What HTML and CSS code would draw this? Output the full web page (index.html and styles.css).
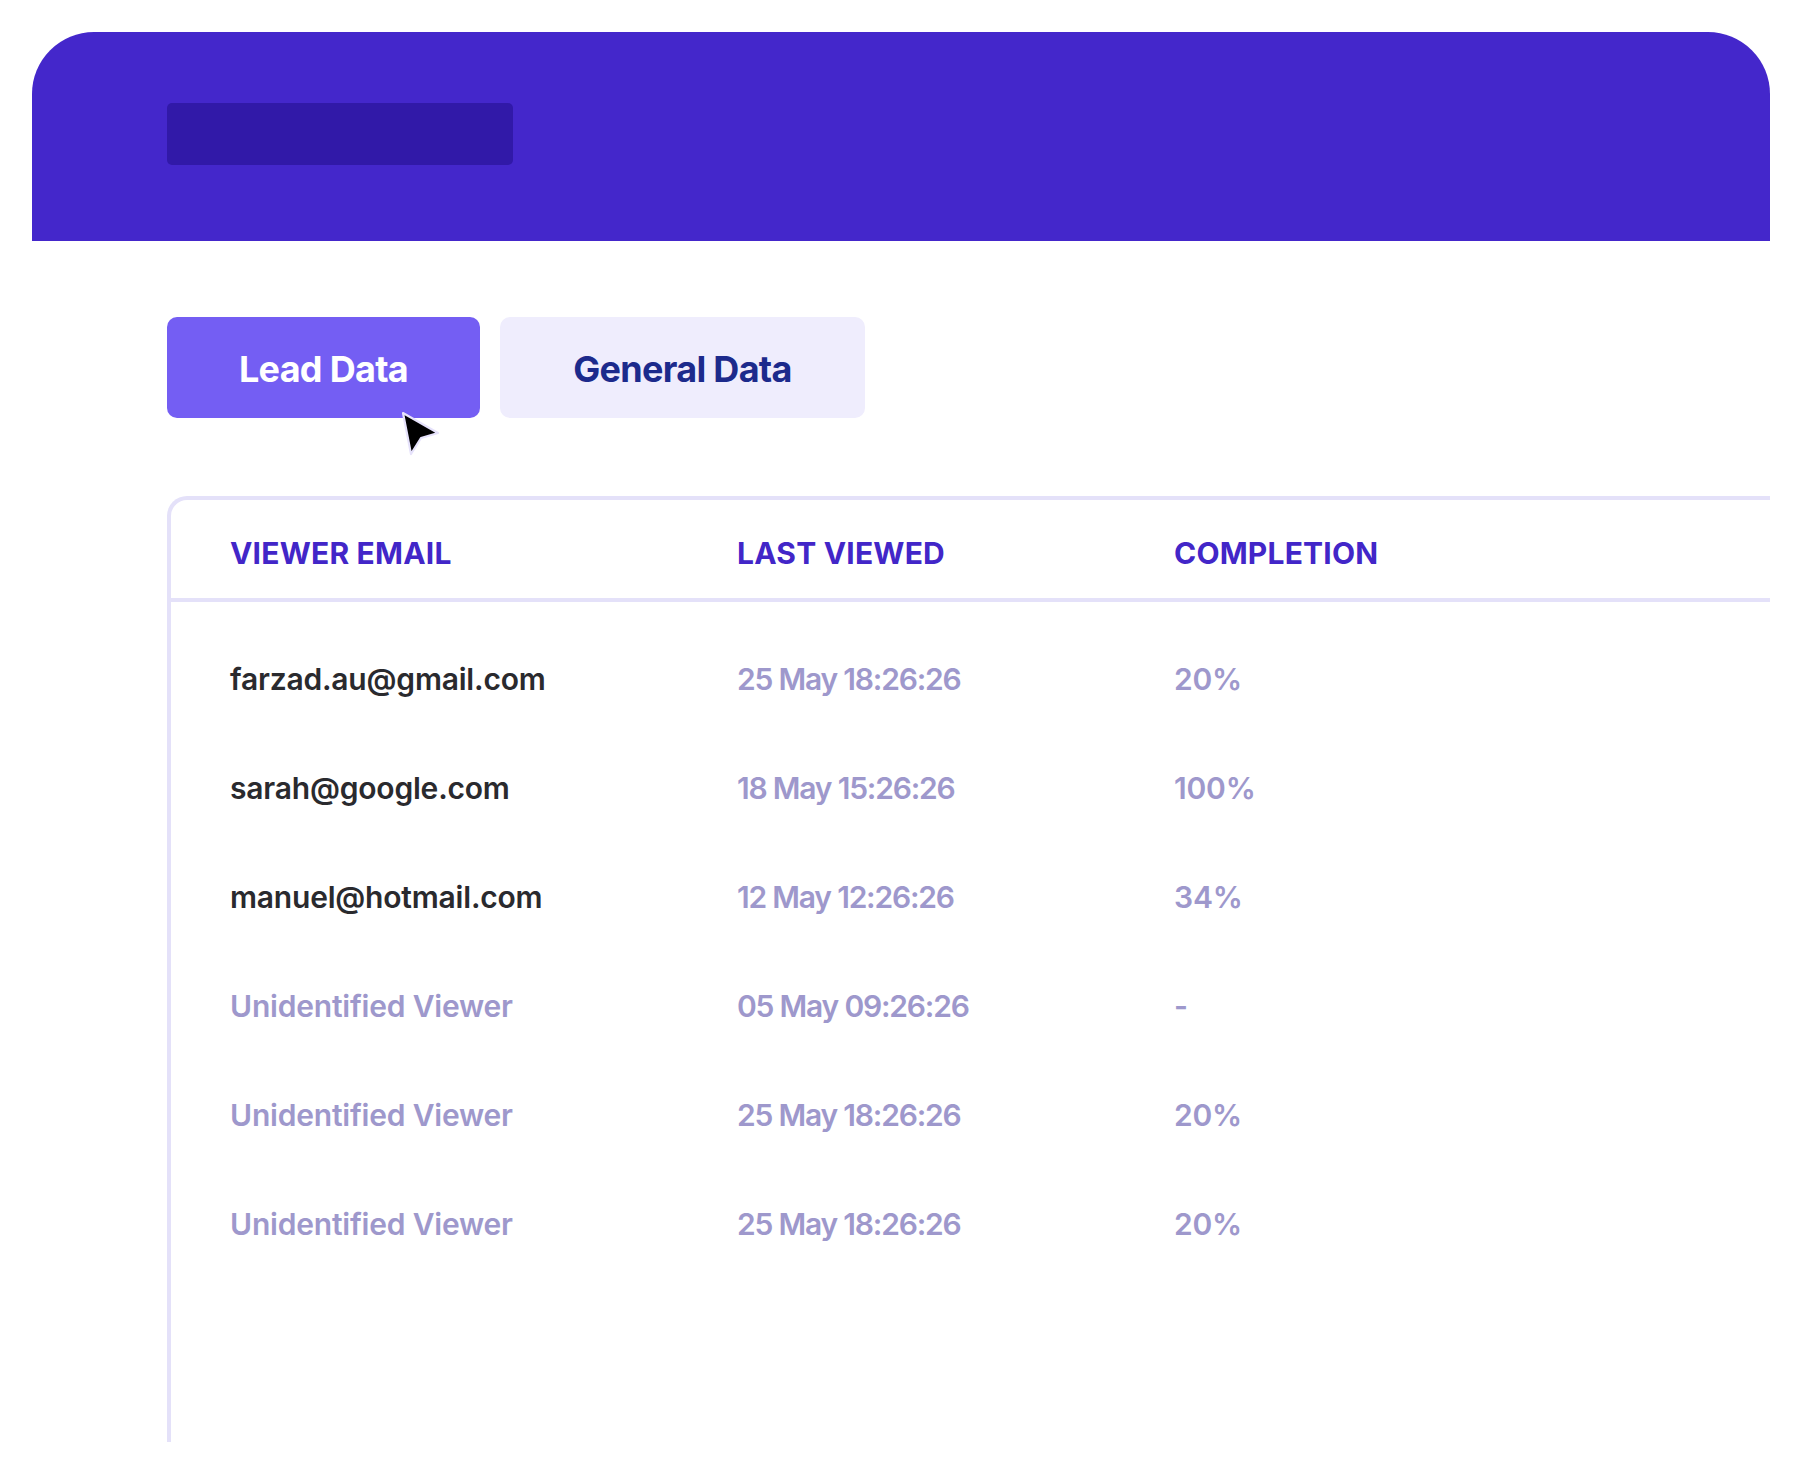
FILE: index.html
```html
<!DOCTYPE html>
<html lang="en">
<head>
<meta charset="utf-8">
<title>Lead Data</title>
<link rel="stylesheet" href="styles.css">
</head>
<body>
<div class="frame">
  <header class="topbar">
    <div class="placeholder"></div>
  </header>
  <main class="content">
    <div class="tabs">
      <button class="tab tab-active">Lead Data</button>
      <button class="tab tab-idle">General Data</button>
      <svg class="cursor" width="44" height="48" viewBox="0 0 44 48" aria-hidden="true">
        <path d="M3 3 L38 23 L21 28 L11 44 Z" fill="#000" stroke="#e6e2fb" stroke-width="2.2" stroke-linejoin="round"/>
      </svg>
    </div>
    <section class="card">
      <div class="row head">
        <div>VIEWER EMAIL</div>
        <div>LAST VIEWED</div>
        <div>COMPLETION</div>
      </div>
      <div class="body">
        <div class="row">
          <div class="email">farzad.au@gmail.com</div>
          <div class="muted date">25 May 18:26:26</div>
          <div class="muted">20%</div>
        </div>
        <div class="row">
          <div class="email">sarah@google.com</div>
          <div class="muted date">18 May 15:26:26</div>
          <div class="muted">100%</div>
        </div>
        <div class="row">
          <div class="email">manuel@hotmail.com</div>
          <div class="muted date">12 May 12:26:26</div>
          <div class="muted">34%</div>
        </div>
        <div class="row">
          <div class="muted">Unidentified Viewer</div>
          <div class="muted date">05 May 09:26:26</div>
          <div class="muted">-</div>
        </div>
        <div class="row">
          <div class="muted">Unidentified Viewer</div>
          <div class="muted date">25 May 18:26:26</div>
          <div class="muted">20%</div>
        </div>
        <div class="row">
          <div class="muted">Unidentified Viewer</div>
          <div class="muted date">25 May 18:26:26</div>
          <div class="muted">20%</div>
        </div>
      </div>
    </section>
  </main>
</div>
</body>
</html>
```
FILE: styles.css
```css
* { box-sizing: border-box; }

html, body {
  margin: 0;
  padding: 0;
  background: #ffffff;
  font-family: "Inter", "Liberation Sans", sans-serif;
}

.frame {
  margin: 32px 32px 0 32px;
  width: 1738px;
  height: 1410px;
  overflow: hidden;
}

.topbar {
  height: 209px;
  background: #4427cb;
  border-radius: 62px 62px 0 0;
  padding: 71px 0 0 135px;
}

.placeholder {
  width: 346px;
  height: 62px;
  background: #3119a8;
  border-radius: 5px;
}

.content {
  padding: 76px 0 0 135px;
}

.tabs {
  position: relative;
  display: flex;
  gap: 20px;
}

.tab {
  height: 101px;
  border: none;
  border-radius: 10px;
  font-family: inherit;
  font-size: 36px;
  font-weight: 700;
  letter-spacing: -0.7px;
  padding: 3px 0 0 0;
}

.tab-active {
  width: 313px;
  background: #745ef3;
  color: #ffffff;
}

.tab-idle {
  width: 365px;
  background: #efedfd;
  color: #1c2a8c;
}

.cursor {
  position: absolute;
  left: 233px;
  top: 93px;
}

.card {
  margin-top: 78px;
  width: 1700px;
  height: 1200px;
  border-top: 4px solid #e4e1f9;
  border-left: 4px solid #e4e1f9;
  border-radius: 20px 0 0 0;
}

.row {
  display: grid;
  grid-template-columns: 507px 437px 1fr;
  padding-left: 59px;
  align-items: center;
}

.head {
  height: 102px;
  padding-top: 7px;
  border-bottom: 4px solid #e4e1f9;
  color: #4226c8;
  font-size: 30px;
  font-weight: 700;
  letter-spacing: 0.2px;
}

.body {
  padding-top: 22px;
}

.body .row {
  height: 109px;
  font-size: 30px;
  font-weight: 600;
  letter-spacing: -0.2px;
}

.email {
  color: #2a2a2e;
}

.muted {
  color: #9e98cc;
}

.body .row .date {
  letter-spacing: -1.2px;
}
```
